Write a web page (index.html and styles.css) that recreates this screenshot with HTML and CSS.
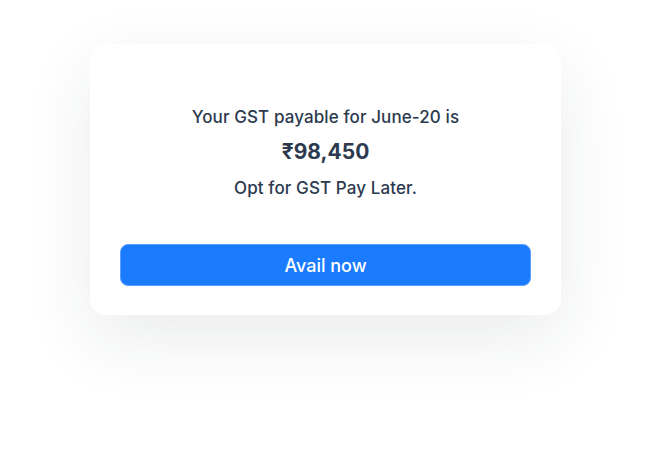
FILE: index.html
```html
<!DOCTYPE html>
<html>
<head>
<meta charset="utf-8">
<link rel="stylesheet" href="styles.css">
</head>
<body>
<div class="stage">
  <div class="card">
    <p class="line">Your GST payable for June-20 is</p>
    <p class="amount">₹98,450</p>
    <p class="line opt">Opt for GST Pay Later.</p>
    <button class="cta">Avail now</button>
  </div>
</div>
</body>
</html>
```
FILE: styles.css
```css
html, body {
  margin: 0;
  padding: 0;
  background: #ffffff;
}
.stage {
  box-sizing: border-box;
  min-height: 450px;
  padding: 44px 0 0 90px;
  font-family: "Inter", "Noto Sans", sans-serif;
}
.card {
  box-sizing: border-box;
  width: 471px;
  height: 271px;
  background: #ffffff;
  border-radius: 16px;
  box-shadow: 0 24px 70px rgba(30, 40, 60, 0.09);
  padding: 62px 30px 0 30px;
  display: flex;
  flex-direction: column;
  align-items: center;
  color: #2c3a4f;
}
.line {
  margin: 0;
  font-size: 17px;
  line-height: 22px;
  font-weight: 500;
  letter-spacing: 0.1px;
}
.amount {
  margin: 10px 0 0 0;
  font-size: 21px;
  line-height: 28px;
  font-weight: 700;
}
.opt {
  margin-top: 11px;
}
.cta {
  margin-top: 45px;
  width: 411px;
  height: 42px;
  border: 1px solid #5d9fff;
  border-radius: 8px;
  background: #1a7bff;
  color: #ffffff;
  font-family: inherit;
  font-size: 18px;
  font-weight: 500;
}
```
